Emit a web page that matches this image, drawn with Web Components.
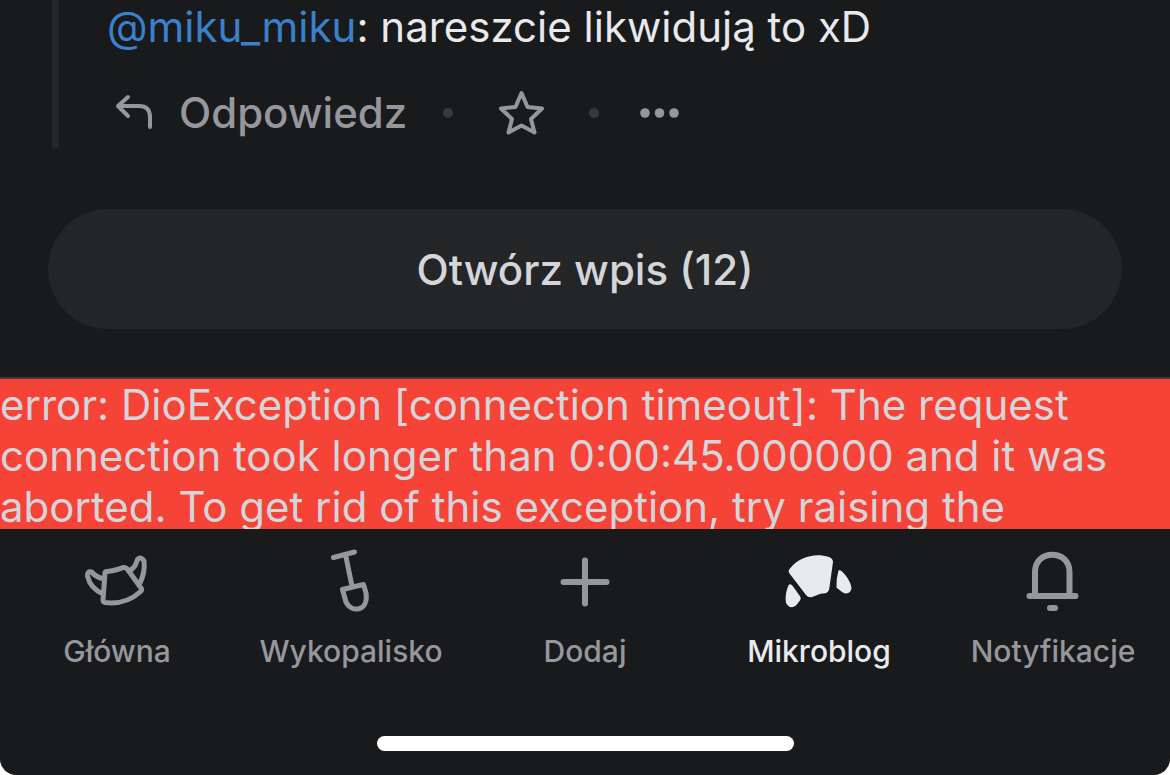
<!DOCTYPE html>
<html lang="pl">
<head>
<meta charset="utf-8">
<meta name="viewport" content="width=device-width, initial-scale=1">
<title>Mikroblog</title>
<style>
  html { background: #fff; }
  body { margin: 0; font-family: Inter, "Liberation Sans", sans-serif; }
</style>
</head>
<body>
<micro-app>
  <comment-card><a slot="author" href="#miku_miku">@miku_miku</a>: nareszcie likwidują to xD</comment-card>
  <open-entry>Otwórz wpis (12)</open-entry>
  <error-banner>
    <error-line>error: DioException [connection timeout]: The request</error-line>
    <error-line>connection took longer than 0:00:45.000000 and it was</error-line>
    <error-line>aborted. To get rid of this exception, try raising the</error-line>
  </error-banner>
  <tab-bar>
    <tab-item>
      <svg slot="icon" viewBox="-4 0 72 72" width="72" height="72" fill="none" stroke="currentColor" stroke-width="5" stroke-linejoin="round" stroke-linecap="round" aria-hidden="true"><path d="M22 26.500Q33 25 38 22.500Q41 22 43 25L56 43Q58 45 55 47C45 56 32 59 20 57.500Q18 57 18 55L20 28Q20 26.500 22 26.500M19.500 34C14 33 10 31 6.500 27Q2 26 2.500 31Q5 43 18 49M44 26C50 23 51 19 52.500 14.500Q56 11 59 16Q60.500 28 54 40"/></svg>
      Główna
    </tab-item>
    <tab-item>
      <svg slot="icon" viewBox="0 0 72 72" width="72" height="72" fill="none" stroke="currentColor" stroke-width="5" stroke-linejoin="round" stroke-linecap="round" aria-hidden="true"><path d="M18.500 12.500L39.500 7M31 12L37 41M27.500 44.500L48.500 39.500L51 48C54 67 36 68 31 57Z"/></svg>
      Wykopalisko
    </tab-item>
    <tab-item>
      <svg slot="icon" viewBox="0 0 72 72" width="72" height="72" fill="none" stroke="currentColor" stroke-width="6" stroke-linecap="round" aria-hidden="true"><path d="M14.500 37H57.500M36 15.500V58.500"/></svg>
      Dodaj
    </tab-item>
    <tab-item active>
      <svg slot="icon" viewBox="0 0 72 72" width="72" height="72" fill="currentColor" aria-hidden="true"><path d="M6.500 28.500Q4.500 26 7 23.500C16 12.500 31 7.500 46 12Q50 13.500 50 17L46.500 42Q46 48 41 48.500C35 48.500 34 51 28 52.200Q25 52.500 23 50ZM6 39.500Q8.500 38.500 10.500 42L17.500 52Q18 54 17 55.500L13 60.500Q7 65 3 58C2 51 3.500 44 6 39.500ZM55.500 25.500Q57.500 24.500 60 27.500C66 34 68 39 68.500 43Q68 48 63 48.500Q60 48.500 53.500 42.500Q53 34 55.500 25.500Z"/></svg>
      Mikroblog
    </tab-item>
    <tab-item>
      <svg slot="icon" viewBox="0 0 72 72" width="72" height="72" fill="none" stroke="currentColor" stroke-width="6" stroke-linejoin="round" stroke-linecap="round" aria-hidden="true"><path d="M12.500 51H58.500M18 51V27C18 4 52.500 4 52.500 27V51M33 63H38"/></svg>
      Notyfikacje
    </tab-item>
  </tab-bar>
</micro-app>

<script>
class BaseElement extends HTMLElement {
  constructor() {
    super();
    this.attachShadow({ mode: "open" }).innerHTML = this.constructor.markup;
  }
}

customElements.define("micro-app", class extends BaseElement {
  static markup = `
    <style>
      :host { display: flex; flex-direction: column; box-sizing: border-box; min-height: 100vh;
        background: #191a1c; color: #e8e9ed; border-radius: 0 0 16px 16px; overflow: hidden; }
      .home { width: 36%; max-width: 417px; height: 15px; border-radius: 8px; background: #fff; margin: auto auto 24px; }
    </style>
    <slot></slot>
    <div class="home"></div>`;
});

customElements.define("comment-card", class extends BaseElement {
  static markup = `
    <style>
      :host { display: flex; gap: 48px; margin: 0 48px 60px 52px; }
      .thread { width: 7px; background: #252628; border-radius: 0 0 4px 4px; }
      .body { flex: 1; }
      p { margin: 0; font-size: 42px; line-height: 53px; white-space: nowrap; }
      ::slotted(a) { color: #3a80cb; text-decoration: none; }
      .actions { display: flex; align-items: center; gap: 36px; height: 72px; margin-top: 24px; }
      button { font: inherit; color: #96979d; background: none; border: 0; padding: 0; margin: 0; display: flex; align-items: center; cursor: pointer; }
      .reply { font-size: 42px; line-height: 48px; font-weight: 500; gap: 24px; min-width: 300px; }
      svg { display: block; }
      .dot { width: 10px; height: 10px; border-radius: 50%; background: #38393d; }
    </style>
    <div class="thread"></div>
    <div class="body">
      <p><slot name="author"></slot><slot></slot></p>
      <div class="actions">
        <button class="reply"><svg width="48" height="48" viewBox="-1 0 48 48" fill="none" stroke="currentColor" stroke-width="4" stroke-linecap="round" stroke-linejoin="round" aria-hidden="true"><path d="M20 8L10 17L20 27M10 17H31Q42 17 42 28V38"/></svg>Odpowiedz</button>
        <span class="dot"></span>
        <button aria-label="Ulubione"><svg width="64" height="64" viewBox="0 0 64 64" fill="none" stroke="currentColor" stroke-width="4" stroke-linejoin="round" aria-hidden="true"><path d="M32.500 12L38.500 26L53 27.500L42 38L45.500 51.500L32.500 44.500L19.500 51.500L23 38L12 27.500L26.500 26Z"/></svg></button>
        <span class="dot"></span>
        <button aria-label="Więcej"><svg width="48" height="48" viewBox="-1 0 48 48" fill="currentColor" aria-hidden="true"><circle cx="9" cy="24" r="4.800"/><circle cx="23.500" cy="24" r="4.800"/><circle cx="38" cy="24" r="4.800"/></svg></button>
      </div>
    </div>`;
});

customElements.define("open-entry", class extends BaseElement {
  static markup = `
    <style>
      :host { display: block; margin: 0 48px 48px; }
      button { display: block; width: 100%; height: 120px; padding: 2px 0 0; border: 0; border-radius: 60px; background: #242527;
        color: #d4d5d9; font: 500 42px/48px Inter, "Liberation Sans", sans-serif; cursor: pointer; }
    </style>
    <button><slot></slot></button>`;
});

customElements.define("error-banner", class extends BaseElement {
  static markup = `
    <style>
      :host { display: block; box-sizing: border-box; max-height: 152px; overflow: hidden;
        border-top: 2px solid #3b3c3f; background: #f54337; color: #d4d5d9;
        font-size: 42px; line-height: 51px; white-space: nowrap; }
    </style>
    <slot></slot>`;
});

customElements.define("error-line", class extends BaseElement {
  static markup = `<style>:host { display: block; }</style><slot></slot>`;
});

customElements.define("tab-bar", class extends BaseElement {
  static markup = `
    <style>
      :host { display: block; }
      nav { display: grid; grid-template-columns: repeat(5, minmax(0, 1fr)); padding-top: 16px; }
    </style>
    <nav><slot></slot></nav>`;
});

customElements.define("tab-item", class extends BaseElement {
  static markup = `
    <style>
      :host { display: block; color: #96979d; }
      :host([active]) { color: #e9eaee; }
      button { width: 100%; display: flex; flex-direction: column; align-items: center; gap: 16px; padding: 0; border: 0;
        background: none; color: inherit; font: 500 30px/36px Inter, "Liberation Sans", sans-serif; white-space: nowrap; cursor: pointer; }
    </style>
    <button><slot name="icon"></slot><span><slot></slot></span></button>`;
});
</script>
</body>
</html>
